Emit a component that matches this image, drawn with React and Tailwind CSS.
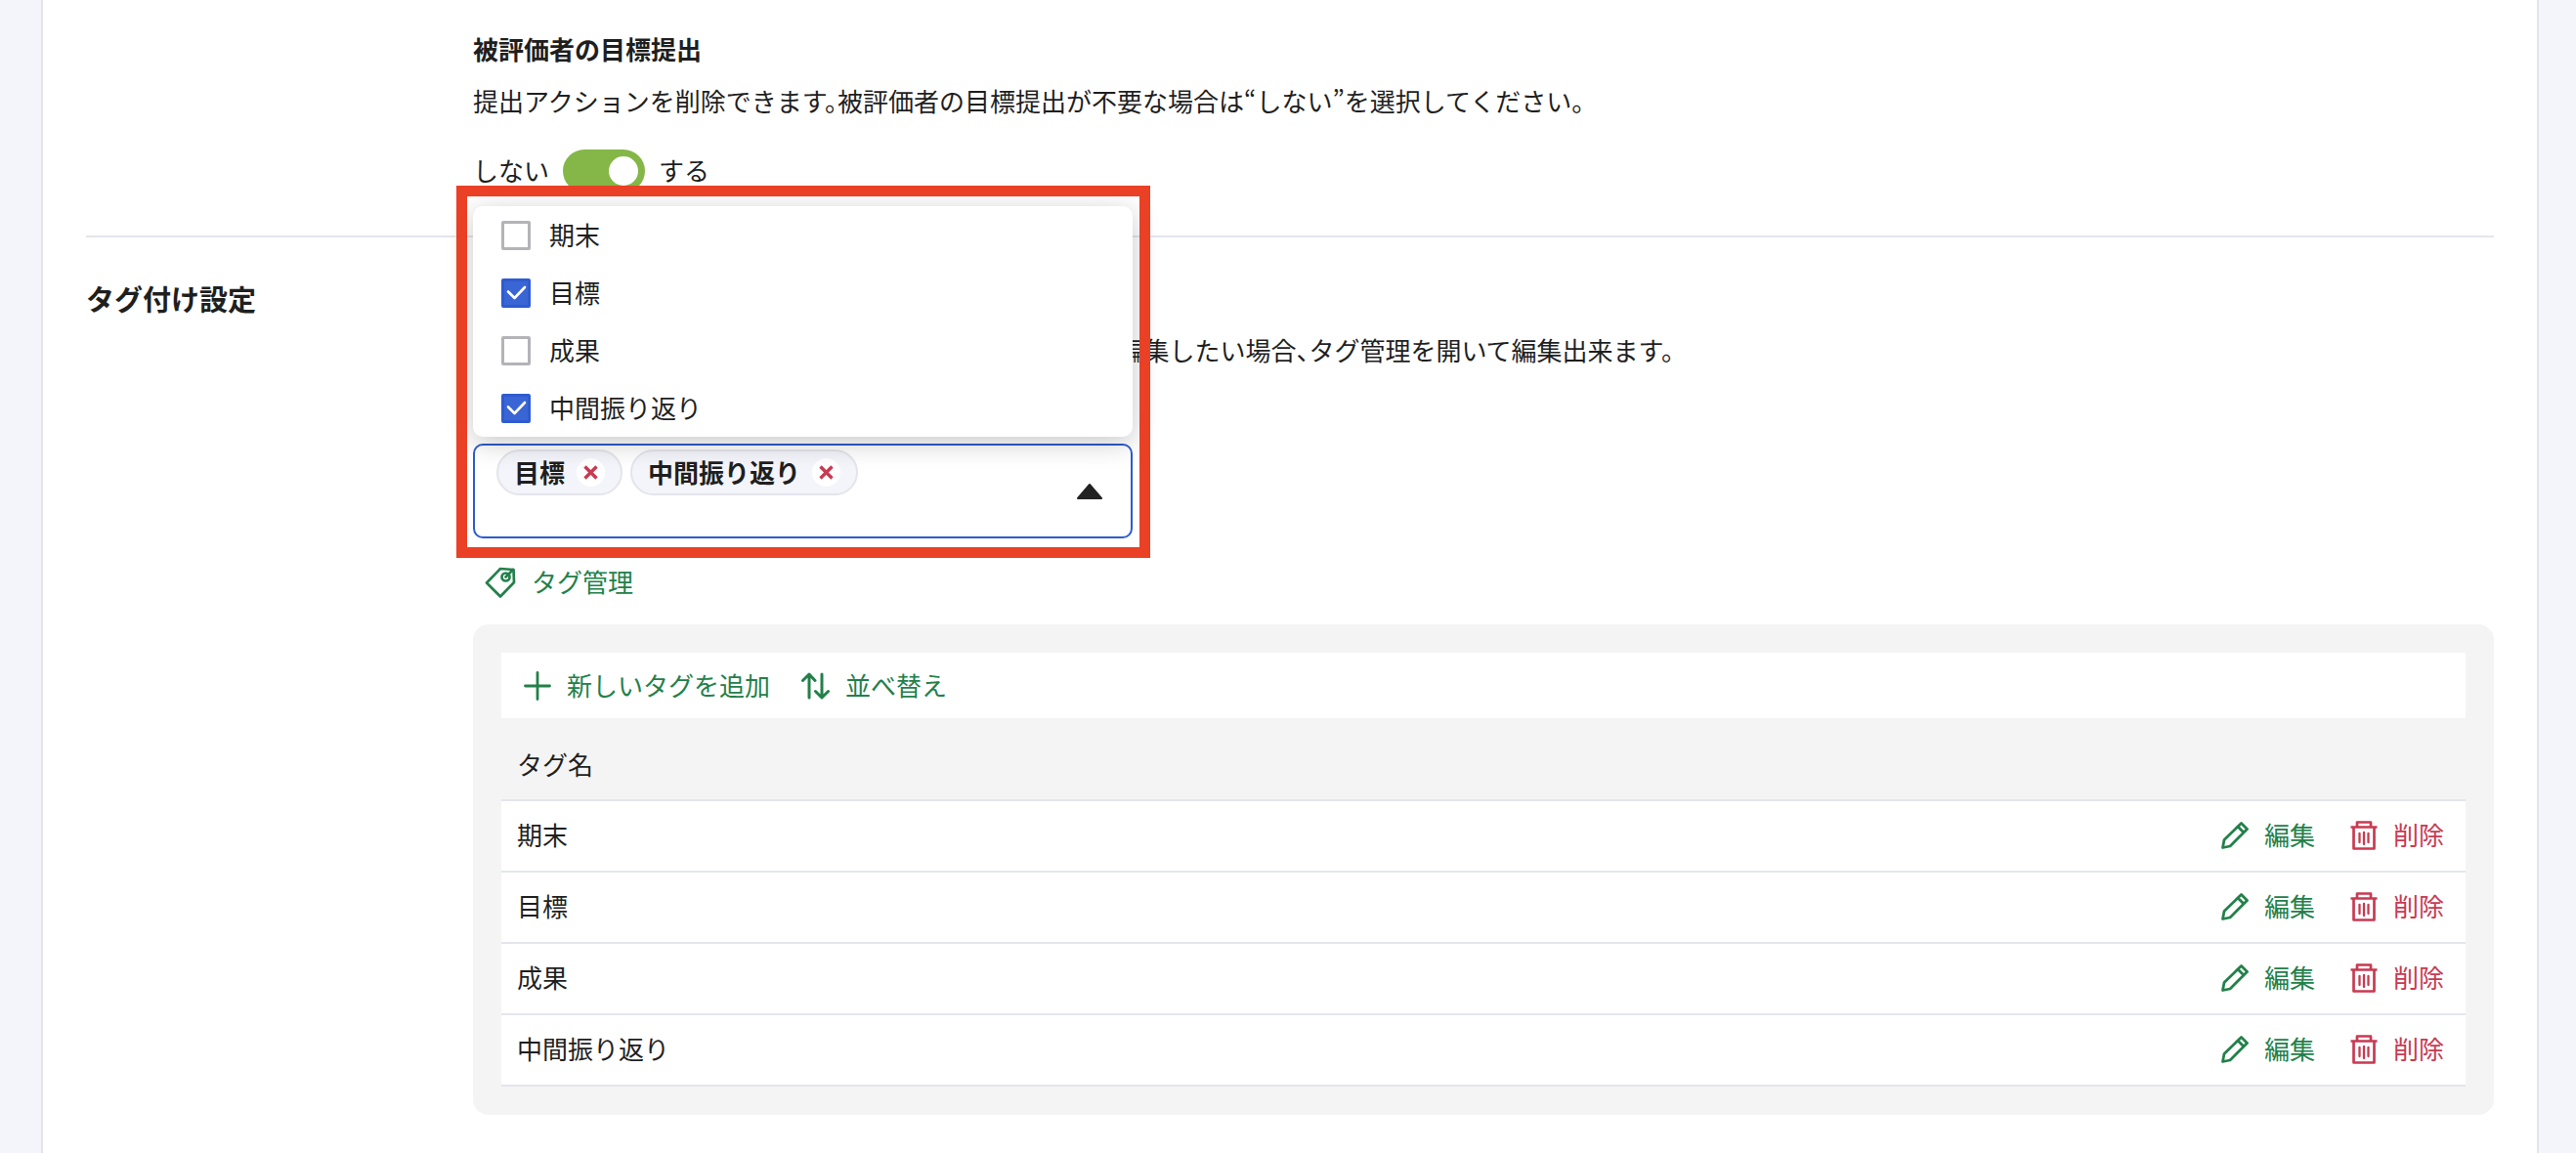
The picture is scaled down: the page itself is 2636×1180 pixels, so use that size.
import React, { useState } from "react";

const tags = ["期末", "目標", "成果", "中間振り返り"];

const TagIcon = () => (
  <svg width="32" height="32" viewBox="0 0 32 32" fill="none" stroke="currentColor" strokeWidth="2.7" strokeLinejoin="round" strokeLinecap="round">
    <path d="M16 2 L29.5 3 L30 16 L16 30.5 L2 16.5 Z" />
    <circle cx="21.5" cy="10.5" r="4" />
    <path d="M21.5 10.5 L29 3" />
  </svg>
);

const PlusIcon = () => (
  <svg width="28" height="30" viewBox="0 0 28 30" fill="none" stroke="currentColor" strokeWidth="2.8" strokeLinecap="round">
    <path d="M14 1.5 V28.5 M1.5 15 H26.5" />
  </svg>
);

const SortIcon = () => (
  <svg width="29" height="28" viewBox="0 0 29 28" fill="none" stroke="currentColor" strokeWidth="3" strokeLinecap="round" strokeLinejoin="round">
    <path d="M8 26 V2 M1.5 8.5 L8 2 L14 8.5" />
    <path d="M21 2 V26 M14.5 19.5 L21 26 L27.5 19.5" />
  </svg>
);

const PencilIcon = () => (
  <svg width="28" height="28" viewBox="0 0 28 28" fill="none" stroke="currentColor" strokeWidth="2.8" strokeLinejoin="round">
    <path d="M1.5 26.5 L3 18.5 L20.5 1.5 L26.5 7.5 L9 25 Z" />
    <path d="M17 5 L23 11" />
  </svg>
);

const TrashIcon = () => (
  <svg width="28" height="30" viewBox="0 0 28 30" fill="none" stroke="currentColor" strokeWidth="2.7" strokeLinejoin="round">
    <path d="M0.5 6.5 H27.5 M7 6 V1.5 H21 V6" />
    <path d="M3.5 6.5 V28.5 H24.5 V6.5" />
    <path d="M9.5 13 V22 M14 12 V24 M18.5 13 V22" strokeLinecap="round" strokeWidth="2.3" />
  </svg>
);

const App = () => {
  const [submitEnabled, setSubmitEnabled] = useState(true);
  const [selected, setSelected] = useState(["目標", "中間振り返り"]);
  const [isOpen, setIsOpen] = useState(true);

  const toggleTag = (tag) => {
    setSelected((prev) =>
      prev.includes(tag) ? prev.filter((t) => t !== tag) : tags.filter((t) => t === tag || prev.includes(t))
    );
  };

  return (
    <div
      lang="ja"
      className="min-h-screen flex bg-[#f4f5fa] pl-[42px] pr-[38px] text-[26px] leading-10 text-[#1f1f1f] font-['Noto_Sans_CJK_JP',sans-serif] [font-feature-settings:'halt']"
    >
      <main className="flex-1 min-w-0 bg-white border-x-2 border-[#e4e5ec] px-11">
        <section className="pt-[30px] pb-11 pl-[396px] border-b-2 border-[#e4e5ec]">
          <h3 className="font-bold">被評価者の目標提出</h3>
          <p className="mt-[13px]">
            提出アクションを削除できます。被評価者の目標提出が不要な場合は“しない”を選択してください。
          </p>
          <label className="mt-[30px] h-11 inline-flex items-center gap-3.5 cursor-pointer">
            <span className="pb-0.5">しない</span>
            <input
              type="checkbox"
              role="switch"
              aria-label="被評価者の目標提出"
              checked={submitEnabled}
              onChange={(e) => setSubmitEnabled(e.target.checked)}
              className="peer sr-only"
            />
            <span className="flex h-11 w-[84px] items-center rounded-full bg-gray-300 px-[7px] peer-checked:justify-end peer-checked:bg-[#84b747]">
              <span className="size-[30px] rounded-full bg-white" />
            </span>
            <span className="pb-0.5">する</span>
          </label>
        </section>

        {/* タグ付け設定 */}
        <section className="flex pb-10">
          <h2 className="w-[396px] shrink-0 pt-[42px] text-[29px] font-bold">タグ付け設定</h2>
          <div className="flex-1 min-w-0 pt-[95px]">
            <p>目標評価シートなどに付けるタグを選択できます。タグを編集したい場合、タグ管理を開いて編集出来ます。</p>

            <div className="relative mt-[76px] w-[675px]">
              <div className="flex h-[97px] rounded-[10px] border-2 border-[#2e5bd0] bg-white pl-[22px] pr-7">
                <div className="flex flex-1 items-start gap-2 pt-1">
                  {selected.map((tag) => (
                    <span
                      key={tag}
                      className="flex h-[47px] items-center gap-3 rounded-full border-2 border-[#e4e5ec] bg-[#f4f5fa] px-4 font-bold"
                    >
                      <span className="pb-0.5">{tag}</span>
                      <button
                        type="button"
                        aria-label={`${tag}を外す`}
                        onClick={() => toggleTag(tag)}
                        className="flex size-[29px] items-center justify-center rounded-full bg-white text-[#c83a52]"
                      >
                        <svg width="15" height="15" viewBox="0 0 15 15" stroke="currentColor" strokeWidth="3.4">
                          <path d="M1.5 1.5 L13.5 13.5 M13.5 1.5 L1.5 13.5" />
                        </svg>
                      </button>
                    </span>
                  ))}
                </div>
                <button type="button" aria-label="タグを選択" aria-expanded={isOpen} onClick={() => setIsOpen(!isOpen)}>
                  <svg width="28" height="18" viewBox="0 0 28 18" fill="#222" stroke="#222" strokeWidth="2" strokeLinejoin="round">
                    <path d="M14 2 L26 16 H2 Z" />
                  </svg>
                </button>
              </div>

              {isOpen && (
                <ul className="absolute inset-x-0 bottom-full mb-[7px] rounded-[10px] bg-white shadow-[0_6px_28px_rgba(0,0,0,0.22)]">
                  {tags.map((tag) => (
                    <li key={tag}>
                      <label className="flex h-[59px] items-center gap-[19px] pl-[29px] cursor-pointer">
                        <span className="grid size-[30px] place-items-center">
                          <input
                            type="checkbox"
                            checked={selected.includes(tag)}
                            onChange={() => toggleTag(tag)}
                            className="peer col-start-1 row-start-1 size-[30px] appearance-none rounded-[2px] border-[3px] border-[#b3b3b8] bg-white checked:border-[#2e5bd0] checked:bg-[#3a65d4]"
                          />
                          <svg
                            width="21"
                            height="15"
                            viewBox="0 0 21 15"
                            fill="none"
                            stroke="#fff"
                            strokeWidth="2.6"
                            strokeLinecap="round"
                            strokeLinejoin="round"
                            className="pointer-events-none invisible col-start-1 row-start-1 peer-checked:visible"
                          >
                            <path d="M2 6.5 L8.5 13 L19 2" />
                          </svg>
                        </span>
                        <span className="pb-0.5">{tag}</span>
                      </label>
                    </li>
                  ))}
                </ul>
              )}

              {/* 強調枠 */}
              <div className="pointer-events-none absolute -top-[264px] -bottom-5 -left-[17px] -right-[18px] border-[11px] border-[#ea4025]" />
            </div>

            <button type="button" className="mt-6 ml-3 flex items-center gap-4 text-[#23804a]">
              <TagIcon />
              <span className="pb-0.5">タグ管理</span>
            </button>

            <div className="mt-[22px] rounded-2xl bg-[#f4f4f4] p-[29px]">
              <div className="flex h-[67px] items-center gap-8 bg-white px-[23px] text-[#23804a]">
                <button type="button" className="flex items-center gap-4">
                  <PlusIcon />
                  <span className="pb-0.5">新しいタグを追加</span>
                </button>
                <button type="button" className="flex items-center gap-4">
                  <SortIcon />
                  <span className="pb-0.5">並べ替え</span>
                </button>
              </div>
              <table className="w-full">
                <thead>
                  <tr className="h-[84px] border-b-2 border-[#e4e5ec]">
                    <th scope="col" colSpan={2} className="pt-2.5 px-4 text-left font-normal">タグ名</th>
                  </tr>
                </thead>
                <tbody>
                  {tags.map((tag) => (
                    <tr key={tag} className="h-[73px] border-b-2 border-[#e4e5ec] bg-white">
                      <td className="px-4 pb-1">{tag}</td>
                      <td className="pr-[22px] pb-0.5">
                        <div className="flex justify-end gap-9">
                          <button type="button" className="flex items-center gap-4 text-[#23804a]">
                            <PencilIcon />
                            <span className="pb-0.5">編集</span>
                          </button>
                          <button type="button" className="flex items-center gap-4 text-[#c83a52]">
                            <TrashIcon />
                            <span className="pb-0.5">削除</span>
                          </button>
                        </div>
                      </td>
                    </tr>
                  ))}
                </tbody>
              </table>
            </div>
          </div>
        </section>
      </main>
    </div>
  );
};

export default App;
